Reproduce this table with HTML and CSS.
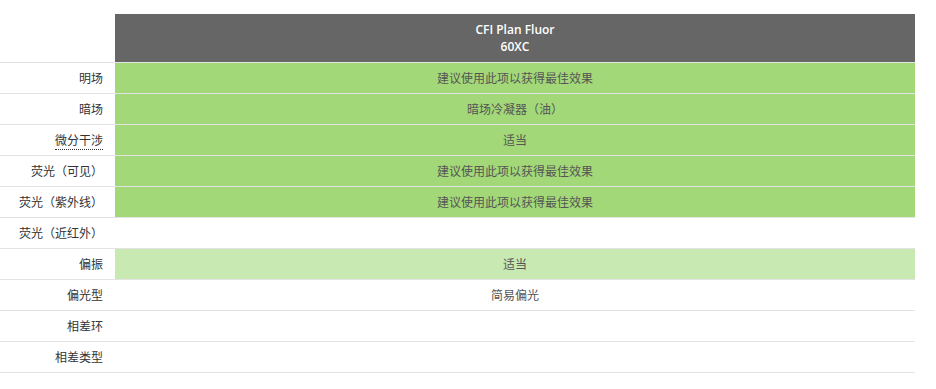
FILE: index.html
```html
<!DOCTYPE html>
<html lang="zh-CN">
<head>
<meta charset="utf-8">
<title>CFI Plan Fluor 60XC</title>
<link rel="stylesheet" href="styles.css">
</head>
<body>
<div class="wrap">
<table class="spec">
  <thead>
    <tr>
      <th class="corner"></th>
      <th class="model">CFI Plan Fluor<br>60XC</th>
    </tr>
  </thead>
  <tbody>
    <tr><th class="label">明场</th><td class="rec">建议使用此项以获得最佳效果</td></tr>
    <tr><th class="label">暗场</th><td class="rec">暗场冷凝器（油）</td></tr>
    <tr><th class="label"><abbr class="term" title="微分干涉">微分干涉</abbr></th><td class="rec">适当</td></tr>
    <tr><th class="label">荧光（可见）</th><td class="rec">建议使用此项以获得最佳效果</td></tr>
    <tr><th class="label">荧光（紫外线）</th><td class="rec">建议使用此项以获得最佳效果</td></tr>
    <tr><th class="label">荧光（近红外）</th><td></td></tr>
    <tr><th class="label">偏振</th><td class="ok">适当</td></tr>
    <tr><th class="label">偏光型</th><td>简易偏光</td></tr>
    <tr><th class="label">相差环</th><td></td></tr>
    <tr><th class="label">相差类型</th><td></td></tr>
  </tbody>
</table>
</div>
</body>
</html>
```

FILE: styles.css
```css
html, body {
  margin: 0;
  padding: 0;
  background: #ffffff;
}
.wrap {
  padding-top: 14px;
}
.spec {
  border-collapse: collapse;
  width: 915px;
  table-layout: fixed;
  font-family: "Open Sans", "Noto Sans CJK SC", sans-serif;
  font-size: 12px;
  line-height: 17px;
}
.spec th, .spec td {
  padding: 0;
}
.corner {
  width: 115px;
}
.model {
  background: #666666;
  color: #ffffff;
  font-weight: 600;
  text-align: center;
  padding: 7px 0 !important;
  height: 34px;
}
.spec tbody tr {
  border-top: 1px solid #e3e3e3;
  height: 30px;
}
.spec tbody tr:last-child {
  border-bottom: 1px solid #e3e3e3;
}
.label {
  text-align: right;
  font-weight: normal;
  color: #333333;
  padding-right: 12px !important;
  height: 30px;
  white-space: nowrap;
}
.spec td {
  text-align: center;
  color: #555555;
  height: 30px;
}
.rec {
  background: #a3d878;
}
.ok {
  background: #c8eab2;
}
.term {
  text-decoration: none;
  border-bottom: 1px dotted #333333;
  cursor: help;
}
```
